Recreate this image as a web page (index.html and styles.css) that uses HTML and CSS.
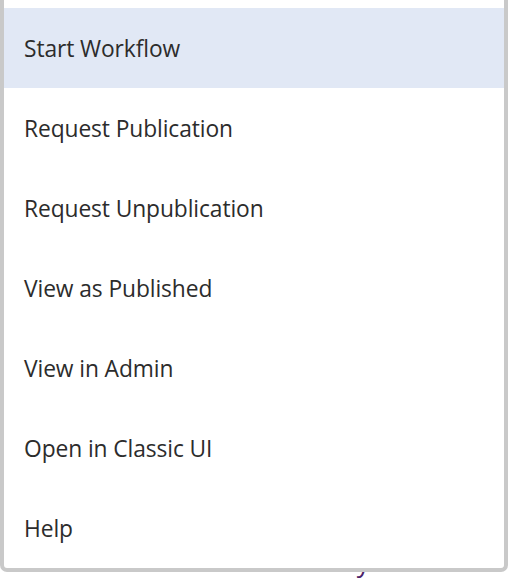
FILE: index.html
```html
<!DOCTYPE html>
<html>
<head>
<meta charset="utf-8">
<link rel="stylesheet" href="styles.css">
</head>
<body>
<div class="page">
  <div class="behind"><span class="dot">.</span><span class="purple">y</span></div>
  <ul class="menu">
    <li class="item active">Start Workflow</li>
    <li class="item">Request Publication</li>
    <li class="item">Request Unpublication</li>
    <li class="item">View as Published</li>
    <li class="item">View in Admin</li>
    <li class="item">Open in Classic UI</li>
    <li class="item">Help</li>
  </ul>
</div>
</body>
</html>
```
FILE: styles.css
```css
html, body {
  margin: 0;
  padding: 0;
  background: #ffffff;
}
.page {
  position: relative;
  width: 508px;
  height: 578px;
  overflow: hidden;
  font-family: "Open Sans", "Noto Sans", sans-serif;
}
.behind {
  position: absolute;
  left: 308px;
  top: 550px;
  font-size: 26px;
  line-height: 24px;
}
.dot {
  color: #bbbbbb;
  margin-right: 42px;
}
.purple {
  color: #4b2068;
}
.menu {
  position: absolute;
  left: 0;
  top: 0;
  width: 500px;
  margin: 0;
  padding: 8px 0 0 0;
  list-style: none;
  background: #ffffff;
  border: 4px solid #c9c9c9;
  border-top: 0;
  border-radius: 0 0 7px 7px;
}
.item {
  height: 80px;
  display: flex;
  align-items: center;
  padding-left: 20px;
  font-size: 22.8px;
  color: #2c2c2c;
  letter-spacing: -0.1px;
}
.item.active {
  background: #e1e8f5;
}
```
